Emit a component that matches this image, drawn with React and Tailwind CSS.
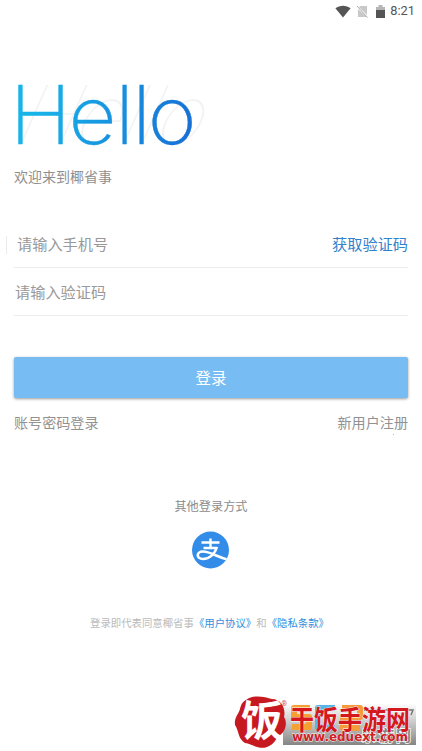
import { clsx } from "clsx";

const StatusBar = () => {
  return (
    <div className="flex h-[22px] items-center justify-end pr-[7px] text-[#555]">
      <svg className="h-[13px] w-4" viewBox="0 0 16 13">
        <path d="M8 12.5 0.4 3.2C4.8-.2 11.2-.2 15.6 3.2Z" fill="#555" />
      </svg>
      <svg className="ml-[6px] h-[13px] w-[11px]" viewBox="0 0 11 13">
        <path d="M1 4 10 12H1ZM3 1H10V10L2 2Z" fill="#c8c8c8" />
        <path d="M0 1 10.5 12.5" stroke="#aaa" strokeWidth="1" />
      </svg>
      <svg className="ml-[8px] h-[13px] w-[9px]" viewBox="0 0 9 13">
        <path d="M0 2H2.5V0H6.5V2H9V6H0Z" fill="#b5b5b5" />
        <path d="M0 5H9V13H0Z" fill="#555" />
      </svg>
      <span className="ml-[5px] font-[Roboto] text-[12.8px] leading-none">8:21</span>
    </div>
  );
};

const Hello = () => {
  return (
    <svg className="block h-[90px] w-[240px] overflow-visible" viewBox="0 70 240 90" fontFamily="Inter, sans-serif">
      <defs>
        <linearGradient id="hello" gradientUnits="userSpaceOnUse" x1="17" y1="100" x2="194" y2="125">
          <stop offset="0" stopColor="#17b4e8" />
          <stop offset="1" stopColor="#1763d2" />
        </linearGradient>
      </defs>
      <text
        transform="translate(0 143.5) skewX(-24)"
        x="11 69 115 133 150"
        fontSize="81"
        fontWeight="100"
        fill="#f3f3f3"
      >
        Hello
      </text>
      <text
        transform="translate(0 143.5) scale(1.03 1)"
        x="9.500 66.500 112 128.500 143.500"
        fontSize="81"
        fontWeight="200"
        fill="url(#hello)"
        stroke="url(#hello)"
        strokeWidth="0.4"
      >
        Hello
      </text>
    </svg>
  );
};

const Field = ({ label, action, className }) => {
  return (
    <div className={clsx("mx-[14px] flex h-12 items-center justify-between border-b border-[#ececec] text-[15.2px]", className)}>
      <span className="text-[#999]">{label}</span>
      {action && <span className="text-[#3182cd]">{action}</span>}
    </div>
  );
};

const Alipay = () => {
  return (
    <svg className="h-[38px] w-[38px]" viewBox="0 0 38 38">
      <defs>
        <clipPath id="disc">
          <circle cx="18.500" cy="19" r="18.500" />
        </clipPath>
      </defs>
      <circle cx="18.500" cy="19" r="18.500" fill="#338ce7" />
      <g fill="none" stroke="#fff" clipPath="url(#disc)">
        <path d="M18.500 7.500V17M9.500 11.500H27.500M11.500 17H25" strokeWidth="2.400" />
        <path
          d="M25 16C23 23 17.500 28 11 28C4 28 4 20.500 11 20.500C18 20.500 24 25.500 37 29"
          strokeWidth="2.600"
        />
      </g>
    </svg>
  );
};

const Watermark = () => {
  return (
    <svg className="block h-[66px] w-[200px]" viewBox="222 685 200 66">
      <defs>
        <linearGradient id="plate" x1="0" y1="0" x2="0" y2="1">
          <stop offset="0" stopColor="#fff" />
          <stop offset="0.5" stopColor="#c5c5c5" />
          <stop offset="1" stopColor="#858585" />
        </linearGradient>
      </defs>
      <rect x="283" y="703" width="133" height="42" fill="url(#plate)" />
      <g fill="none" strokeWidth="6" strokeLinejoin="round">
        <path d="M310 708H294V717H309V727H292" stroke="#f5a033" />
        <path d="M335 708H318V728H335" stroke="#55b5e5" />
        <path d="M342 708H360V717H343V728H360" stroke="#f59b3e" />
      </g>
      <path d="M364 710H413L411 715" fill="none" stroke="#777" strokeWidth="1.500" />
      <g fontFamily="'Noto Sans CJK SC', sans-serif" fontWeight="700" stroke="#fff" paintOrder="stroke">
        <text x="361 379 396" y="741" fontSize="15" fill="#858585" strokeWidth="1.500">
          乐游网
        </text>
        <path
          d="M246 700C253 694 265 697 272 699C281 699 286 708 284 717C288 723 285 732 280 735C275 739 275 744 267 747C259 750 252 744 245 743C238 739 239 731 235 725C234 718 238 715 240 709C241 705 242 702 246 700Z"
          fill="#c71920"
          stroke="none"
        />
        <text x="241" y="736" fontSize="42" fill="#fff" stroke="none">
          饭
        </text>
        <text
          x="290"
          y="730"
          fontSize="27"
          textLength="120"
          lengthAdjust="spacingAndGlyphs"
          fill="#d5171e"
          strokeWidth="0.8"
        >
          干饭手游网
        </text>
      </g>
      <text x="281.500" y="706" fontFamily="Roboto" fontSize="7" fill="#c55">
        ®
      </text>
      <text
        x="292"
        y="740.5"
        textLength="116"
        lengthAdjust="spacingAndGlyphs"
        fontFamily="'DejaVu Sans', sans-serif"
        fontSize="12"
        fontWeight="700"
        fill="#cf2027"
        stroke="#fff"
        strokeWidth="0.8"
        paintOrder="stroke"
      >
        www.eduext.com
      </text>
    </svg>
  );
};

const App = () => {
  return (
    <div className="flex h-[751px] w-[422px] flex-col overflow-hidden bg-white font-['Noto_Sans_CJK_SC',sans-serif] text-[#999]">
      <StatusBar />
      <div className="mt-12">
        <Hello />
      </div>
      <div className="mt-[6px] pl-[14px] text-sm leading-5 text-[#8f8f8f]">欢迎来到椰省事</div>
      <div className="mt-[34px] flex">
        <div className="mt-[16px] ml-[6px] h-[18px] w-px bg-[#ebebeb]" />
        <Field label="请输入手机号" action="获取验证码" className="ml-[7px] flex-1 pl-[3px]" />
      </div>
      <Field label="请输入验证码" className="pl-px" />
      <button className="mx-[14px] mt-[41px] h-[41px] shrink-0 rounded-xs bg-[#77bdf3] text-[15.5px] text-white shadow-[0_1px_3px_rgba(0,0,0,0.4)]">
        登录
      </button>
      <div className="mx-[14px] mt-[14px] flex justify-between text-[14.1px] leading-5 text-[#929292]">
        <span>账号密码登录</span>
        <span>新用户注册</span>
      </div>
      <div className="mt-[2px] mr-[28px] h-px w-px self-end bg-[#75d5dc]" />
      <div className="mt-[61px] text-center text-[12.2px] leading-5 text-[#8c8c8c]">其他登录方式</div>
      <div className="mt-[15px] flex justify-center">
        <Alipay />
      </div>
      <div className="mt-[44px] flex pl-[90px] text-[10.4px] leading-5 text-[#bbb]">
        <span>登录即代表同意椰省事</span>
        <span className="text-[#3190dd]">《用户协议》</span>
        <span>和</span>
        <span className="text-[#3190dd]">《隐私条款》</span>
      </div>
      <div className="mt-auto self-end">
        <Watermark />
      </div>
    </div>
  );
};

export default App;
